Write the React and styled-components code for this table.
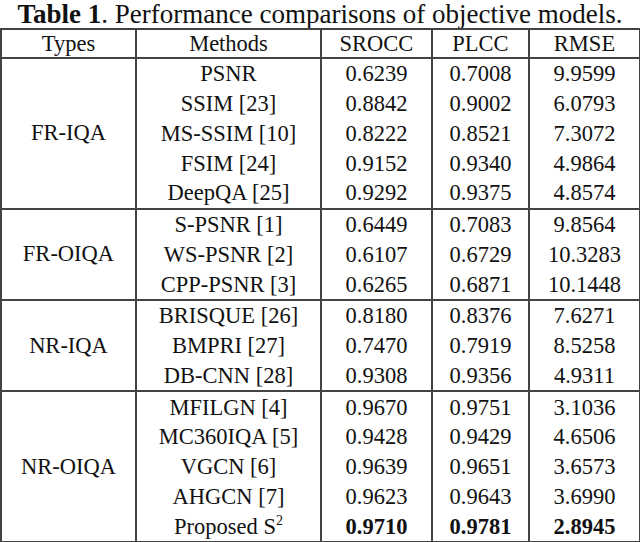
import React from 'react';
import styled, { createGlobalStyle } from 'styled-components';

const GlobalStyle = createGlobalStyle`
  html, body {
    margin: 0;
    padding: 0;
    background: #fff;
  }
  body {
    font-family: "Liberation Serif", "Times New Roman", serif;
    color: #111;
  }
`;

const Wrap = styled.div`
  width: 640px;
  height: 542px;
  display: flex;
  flex-direction: column;
  background: #fff;
`;

const Caption = styled.div`
  height: 28px;
  flex: none;
  line-height: 28px;
  text-align: center;
  font-size: 27px;
  white-space: nowrap;
`;

const Label = styled.b`
  font-weight: 700;
`;

const Table = styled.table`
  width: 639px;
  border-collapse: collapse;
  table-layout: fixed;
  font-size: 22.5px;
`;

const HeadCell = styled.th`
  height: 27px;
  padding: 0;
  font-weight: 400;
  text-align: center;
  border: 2px solid #444;
  line-height: 26px;
`;

const TypeCell = styled.td`
  padding: 0;
  text-align: center;
  vertical-align: middle;
  border: 2px solid #444;
`;

const Cell = styled.td`
  height: 29.75px;
  padding: 0;
  text-align: center;
  line-height: 29px;
  font-weight: ${(p) => (p.$bold ? 700 : 400)};
  border-left: 2px solid #444;
  border-right: 2px solid #444;
  border-top: ${(p) => (p.$first ? '2px solid #444' : 'none')};
  border-bottom: ${(p) => (p.$last ? '2px solid #444' : 'none')};
`;

const Sup = styled.sup`
  font-size: 14px;
  line-height: 0;
  vertical-align: 9px;
`;

const groups = [
  {
    type: 'FR-IQA',
    rows: [
      ['PSNR', '0.6239', '0.7008', '9.9599'],
      ['SSIM [23]', '0.8842', '0.9002', '6.0793'],
      ['MS-SSIM [10]', '0.8222', '0.8521', '7.3072'],
      ['FSIM [24]', '0.9152', '0.9340', '4.9864'],
      ['DeepQA [25]', '0.9292', '0.9375', '4.8574'],
    ],
  },
  {
    type: 'FR-OIQA',
    rows: [
      ['S-PSNR [1]', '0.6449', '0.7083', '9.8564'],
      ['WS-PSNR [2]', '0.6107', '0.6729', '10.3283'],
      ['CPP-PSNR [3]', '0.6265', '0.6871', '10.1448'],
    ],
  },
  {
    type: 'NR-IQA',
    rows: [
      ['BRISQUE [26]', '0.8180', '0.8376', '7.6271'],
      ['BMPRI [27]', '0.7470', '0.7919', '8.5258'],
      ['DB-CNN [28]', '0.9308', '0.9356', '4.9311'],
    ],
  },
  {
    type: 'NR-OIQA',
    rows: [
      ['MFILGN [4]', '0.9670', '0.9751', '3.1036'],
      ['MC360IQA [5]', '0.9428', '0.9429', '4.6506'],
      ['VGCN [6]', '0.9639', '0.9651', '3.6573'],
      ['AHGCN [7]', '0.9623', '0.9643', '3.6990'],
      ['proposed', '0.9710', '0.9781', '2.8945'],
    ],
  },
];

function MethodName({ name }) {
  if (name === 'proposed') {
    return (
      <>
        Proposed S<Sup>2</Sup>
      </>
    );
  }
  return name;
}

export default function App() {
  return (
    <Wrap>
      <GlobalStyle />
      <Caption>
        <Label>Table 1</Label>. Performance comparisons of objective models.
      </Caption>
      <Table>
        <colgroup>
          <col style={{ width: 135 }} />
          <col style={{ width: 185 }} />
          <col style={{ width: 111 }} />
          <col style={{ width: 97 }} />
          <col style={{ width: 111 }} />
        </colgroup>
        <thead>
          <tr>
            <HeadCell>Types</HeadCell>
            <HeadCell>Methods</HeadCell>
            <HeadCell>SROCC</HeadCell>
            <HeadCell>PLCC</HeadCell>
            <HeadCell>RMSE</HeadCell>
          </tr>
        </thead>
        <tbody>
          {groups.map((g) =>
            g.rows.map((r, i) => {
              const first = i === 0;
              const last = i === g.rows.length - 1;
              const bold = r[0] === 'proposed';
              return (
                <tr key={g.type + r[0]}>
                  {first && <TypeCell rowSpan={g.rows.length}>{g.type}</TypeCell>}
                  <Cell $first={first} $last={last}>
                    <MethodName name={r[0]} />
                  </Cell>
                  <Cell $first={first} $last={last} $bold={bold}>{r[1]}</Cell>
                  <Cell $first={first} $last={last} $bold={bold}>{r[2]}</Cell>
                  <Cell $first={first} $last={last} $bold={bold}>{r[3]}</Cell>
                </tr>
              );
            })
          )}
        </tbody>
      </Table>
    </Wrap>
  );
}
